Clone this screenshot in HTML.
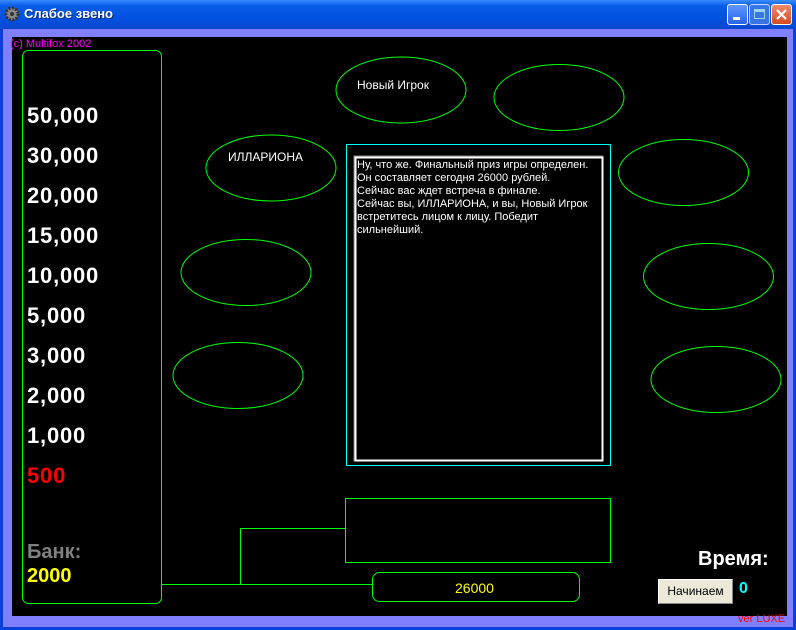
<!DOCTYPE html>
<html><head><meta charset="utf-8"><style>
body{margin:0;width:796px;height:630px;overflow:hidden;background:#0a3fd8;font-family:"Liberation Sans",sans-serif;position:relative}
.title{position:absolute;left:0;top:0;width:796px;height:29px;background:linear-gradient(#3a8cff,#0a5ce8 20%,#0052e0 60%,#0a48d0);}
.title span{position:absolute;left:24px;top:6px;color:#fff;font-weight:bold;font-size:13px;text-shadow:1px 1px #0a2a80}
.frame{position:absolute;left:3px;top:29px;width:790px;height:598px;background:#8080ff}
.black{position:absolute;left:12px;top:37px;width:775px;height:579px;background:#000}
.a{position:absolute;white-space:nowrap}
.m{position:absolute;left:27px;font-weight:bold;font-size:22px;color:#fff;letter-spacing:0.8px;line-height:24px}
.btn{position:absolute;width:21px;height:21px;top:4px;border:1px solid #fff;border-radius:3px;box-sizing:border-box}
</style></head><body>
<div class="title"><span>Слабое звено</span>
<svg style="position:absolute;left:4px;top:6px" width="16" height="16"><circle cx="8" cy="8" r="6" fill="#888" stroke="#333" stroke-dasharray="2 1.5" stroke-width="3"/><circle cx="8" cy="8" r="2" fill="#333"/></svg>
<div class="btn" style="left:727px;background:linear-gradient(#5f96ff,#2a63e8)"><div style="position:absolute;left:5px;top:12px;width:7px;height:3px;background:#fff"></div></div>
<div class="btn" style="left:749px;background:#4a7fe8;opacity:.75"><div style="position:absolute;left:4px;top:4px;width:11px;height:10px;border:1px solid #cfe;border-top-width:3px;box-sizing:border-box"></div></div>
<div class="btn" style="left:771px;background:linear-gradient(#f08a6a,#d64a20)"><svg style="position:absolute;left:3px;top:3px" width="13" height="13"><path d="M2 2L11 11M11 2L2 11" stroke="#fff" stroke-width="2.2"/></svg></div>
</div>
<div class="frame"></div>
<div class="black"></div>
<div class="a" style="left:10px;top:38px;color:#ff00ff;font-size:11px">(c) Multifox 2002</div>
<div class="a" style="left:738px;top:613px;color:#ff0000;font-size:11px">ver LUXE</div>
<svg style="position:absolute;left:0;top:0" width="796" height="630" fill="none">
<rect x="22.5" y="50.5" width="139" height="553" rx="6" stroke="#00ff00"/>
<path d="M162 584.5H372M240.5 584V528.5H345" stroke="#00ff00"/>
<rect x="345.5" y="498.5" width="265" height="64" stroke="#00ff00"/>
<rect x="372.5" y="572.5" width="207" height="29" rx="7" stroke="#00ff00"/>
<rect x="346.5" y="144.5" width="264" height="321" stroke="#00ffff"/>
<rect x="354" y="156" width="249" height="305" stroke="#808080"/>
<rect x="355.5" y="157.5" width="247" height="303" stroke="#fff" stroke-width="2"/>
<g stroke="#00ff00">
<ellipse cx="401" cy="90" rx="65" ry="33"/>
<ellipse cx="559" cy="97.5" rx="65" ry="33"/>
<ellipse cx="271" cy="168" rx="65" ry="33"/>
<ellipse cx="683.5" cy="172.5" rx="65" ry="33"/>
<ellipse cx="246" cy="272.5" rx="65" ry="33"/>
<ellipse cx="708.5" cy="276.5" rx="65" ry="33"/>
<ellipse cx="238" cy="375.5" rx="65" ry="33"/>
<ellipse cx="716" cy="379.5" rx="65" ry="33"/>
</g>
</svg>
<div class="a" style="left:357px;top:78px;color:#fff;font-size:12px">Новый Игрок</div>
<div class="a" style="left:228px;top:150px;color:#fff;font-size:12px">ИЛЛАРИОНА</div>
<div class="a" style="left:357px;top:159px;color:#fff;font-size:11px;line-height:13px">Ну, что же. Финальный приз игры определен.<br>Он составляет сегодня 26000 рублей.<br>Сейчас вас ждет встреча в финале.<br>Сейчас вы, ИЛЛАРИОНА, и вы, Новый Игрок<br>встретитесь лицом к лицу. Победит<br>сильнейший.</div>
<div class="m" style="top:104px">50,000</div>
<div class="m" style="top:144px">30,000</div>
<div class="m" style="top:184px">20,000</div>
<div class="m" style="top:224px">15,000</div>
<div class="m" style="top:264px">10,000</div>
<div class="m" style="top:304px">5,000</div>
<div class="m" style="top:344px">3,000</div>
<div class="m" style="top:384px">2,000</div>
<div class="m" style="top:424px">1,000</div>
<div class="m" style="top:464px;color:#ff0000">500</div>
<div class="m" style="top:540px;color:#808080;font-size:20px;letter-spacing:0">Банк:</div>
<div class="m" style="top:564px;color:#ffff00;font-size:20px;letter-spacing:0">2000</div>
<div class="a" style="left:455px;top:580px;color:#ffff00;font-size:14px">26000</div>
<div class="a" style="left:698px;top:548px;color:#fff;font-weight:bold;font-size:20px">Время:</div>
<div class="a" style="left:658px;top:579px;width:75px;height:25px;box-sizing:border-box;background:#ece9d8;border:1px solid #fff;border-right-color:#888;border-bottom-color:#888;font-size:12px;text-align:center;line-height:23px;color:#000">Начинаем</div>
<div class="a" style="left:739px;top:580px;color:#00ffff;font-weight:bold;font-size:16px">0</div>
</body></html>
